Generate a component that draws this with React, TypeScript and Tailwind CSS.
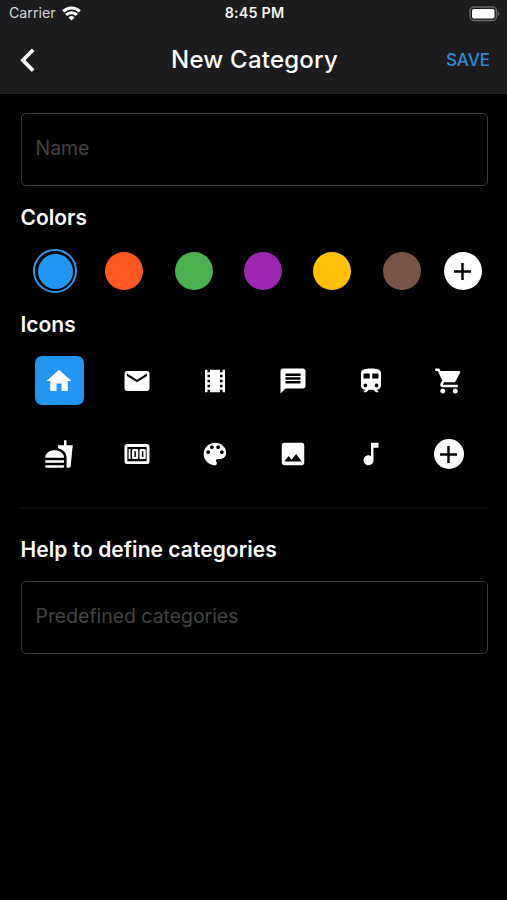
import { useState } from "react";
import { IconType } from "react-icons";
import {
  MdAdd,
  MdEmail,
  MdFastfood,
  MdHome,
  MdImage,
  MdMessage,
  MdMusicNote,
  MdShoppingCart,
  MdTheaters,
  MdTrain,
} from "react-icons/md";
import clsx from "clsx";

const MoneyIcon: IconType = ({ size }) => (
  <svg width={size} height={size} viewBox="0 0 24 24" fill="currentColor">
    <path
      fillRule="evenodd"
      d="M4 4h16a2 2 0 0 1 2 2v12a2 2 0 0 1-2 2H4a2 2 0 0 1-2-2V6c0-1.100.9-2 2-2zm.3 2.300v11.400h15.400V6.300z"
    />
    <path
      fillRule="evenodd"
      d="M5.300 8h1.500v8H5.300zM9 8h3a1 1 0 0 1 1 1v6a1 1 0 0 1-1 1H9a1 1 0 0 1-1-1V9a1 1 0 0 1 1-1zm.900 1.700v4.600h1.200V9.700zM15 8h3a1 1 0 0 1 1 1v6a1 1 0 0 1-1 1h-3a1 1 0 0 1-1-1V9a1 1 0 0 1 1-1zm.900 1.700v4.600h1.200V9.700z"
    />
  </svg>
);

const PaletteIcon: IconType = ({ size }) => (
  <svg width={size} height={size} viewBox="0 0 24 24" fill="currentColor">
    <path d="M12 3c-4.97 0-9 4.03-9 9s4.03 9 9 9c.83 0 1.5-.67 1.5-1.5 0-.39-.15-.74-.39-1.01-.23-.26-.38-.61-.38-.99 0-.83.67-1.5 1.500-1.500H16c2.760 0 5-2.240 5-5 0-4.420-4.030-8-9-8zm-5.500 9c-.83 0-1.500-.67-1.500-1.500S5.670 9 6.500 9 8 9.670 8 10.500 7.330 12 6.500 12zm3-4C8.670 8 8 7.330 8 6.500S8.670 5 9.500 5s1.500.67 1.500 1.500S10.330 8 9.500 8zm5 0c-.83 0-1.500-.67-1.500-1.500S13.670 5 14.500 5s1.500.67 1.500 1.500S15.330 8 14.500 8zm3 4c-.83 0-1.500-.67-1.500-1.500S16.670 9 17.500 9s1.500.67 1.500 1.500-.67 1.500-1.500 1.500z" />
  </svg>
);

const COLORS = [
  { name: "blue", fill: "bg-[#2196f3]", ring: "border-[#2f97e8]" },
  { name: "orange", fill: "bg-[#ff5722]", ring: "border-[#ff5722]" },
  { name: "green", fill: "bg-[#4caf50]", ring: "border-[#4caf50]" },
  { name: "purple", fill: "bg-[#9c27b0]", ring: "border-[#9c27b0]" },
  { name: "amber", fill: "bg-[#ffc107]", ring: "border-[#ffc107]" },
  { name: "brown", fill: "bg-[#795548]", ring: "border-[#795548]" },
];

const ICONS: { name: string; Icon: IconType }[] = [
  { name: "home", Icon: MdHome },
  { name: "mail", Icon: MdEmail },
  { name: "movies", Icon: MdTheaters },
  { name: "message", Icon: MdMessage },
  { name: "train", Icon: MdTrain },
  { name: "shopping", Icon: MdShoppingCart },
  { name: "food", Icon: MdFastfood },
  { name: "money", Icon: MoneyIcon },
  { name: "palette", Icon: PaletteIcon },
  { name: "image", Icon: MdImage },
  { name: "music", Icon: MdMusicNote },
];

const StatusBar = () => (
  <div className="grid h-[27px] grid-cols-3 items-center pl-[9px] pr-[7px] leading-none">
    <div className="flex items-center gap-[6px] text-[#d6d6d8]">
      <span className="text-[14.2px]">Carrier</span>
      <svg width="19" height="15" viewBox="0 0 19 15" fill="none" stroke="#fff" strokeWidth="3">
        <path d="M1.200 5.400a11.800 11.800 0 0 1 16.600 0" />
        <path d="M4.100 8.900a7.600 7.600 0 0 1 10.800 0" />
        <path d="M9.500 14.400 6.500 11.400a4.300 4.300 0 0 1 6 0z" fill="#fff" stroke="none" />
      </svg>
    </div>
    <div className="text-center text-[14.3px] font-semibold tracking-[0.2px] text-[#f2f2f3]">8:45 PM</div>
    <svg className="justify-self-end" width="31" height="16" viewBox="0 0 31 16">
      <rect x="1" y="1" width="26.5" height="13.5" rx="4" fill="none" stroke="#68686a" strokeWidth="1.4" />
      <rect x="3" y="3" width="22.5" height="9.5" rx="2" fill="#fff" />
      <path d="M28.8 5.5c2 .6 2 4 0 4.6z" fill="#68686a" />
    </svg>
  </div>
);

const App = () => {
  const [color, setColor] = useState("blue");
  const [icon, setIcon] = useState("home");

  return (
    <div className="min-h-[900px] w-full bg-black font-['Inter',sans-serif] text-white">
      <header className="h-[94px] border-b border-[#222224] bg-[#1c1c1e]">
        <StatusBar />
        <div className="grid h-[66px] grid-cols-[1fr_auto_1fr] items-center pl-[19px] pr-[17px]">
          <button type="button" aria-label="Back">
            <svg width="16" height="25" viewBox="0 0 16 25" fill="none" stroke="#fff" strokeWidth="3.7">
              <path d="M14.200 1.800 3.900 12.200l10.300 10.400" />
            </svg>
          </button>
          <h1 className="text-[24px] font-medium leading-none tracking-[0.22px]">New Category</h1>
          <button type="button" className="justify-self-end text-[17px] font-medium leading-none text-[#2a8bdb]">
            SAVE
          </button>
        </div>
      </header>

      <main className="pl-[20.5px] pr-[19.5px] pt-[19px]">
        <input
          placeholder="Name"
          className="block h-[73px] w-full rounded-[5px] border-[1.5px] border-[#3a3a3a] bg-transparent px-[14px] pb-[3px] text-[19.5px] tracking-[-0.05px] outline-none placeholder:text-[#444444]"
        />

        <h2 className="mt-[19px] text-[21px] font-semibold leading-[26px]">Colors</h2>
        <div className="mt-[17px] flex h-[46px] items-center">
          {COLORS.map(({ name, fill, ring }) => (
            <button
              key={name}
              type="button"
              aria-label={name}
              onClick={() => setColor(name)}
              className="flex w-[69.3px] justify-center"
            >
              {color === name ? (
                <span className={clsx("flex size-11 items-center justify-center rounded-full border-2", ring)}>
                  <span className={clsx("size-[35px] rounded-full", fill)} />
                </span>
              ) : (
                <span className={clsx("size-[38px] rounded-full", fill)} />
              )}
            </button>
          ))}
          <button
            type="button"
            aria-label="Add color"
            className="ml-[7.5px] flex size-[38px] items-center justify-center rounded-full bg-white text-black"
          >
            <MdAdd size={29} />
          </button>
        </div>

        <h2 className="mt-[18px] text-[21px] font-semibold leading-[26px]">Icons</h2>
        <div className="mt-[18px] grid grid-cols-6 justify-items-center gap-y-[24.5px]">
          {ICONS.map(({ name, Icon }) => (
            <button
              key={name}
              type="button"
              aria-label={name}
              onClick={() => setIcon(name)}
              className={clsx(
                "flex size-[49px] items-center justify-center rounded-[7px]",
                icon === name && "bg-[#2196f3]",
              )}
            >
              <Icon size={30} />
            </button>
          ))}
          <button type="button" aria-label="Add icon" className="flex size-[49px] items-center justify-center">
            <span className="flex size-[30px] items-center justify-center rounded-full bg-white text-black">
              <MdAdd size={29} />
            </span>
          </button>
        </div>

        <hr className="mt-[28.5px] border-t-2 border-[#0c0c0c]" />

        <h2 className="mt-[28px] text-[21px] font-semibold leading-[26px] tracking-[0.05px]">
          Help to define categories
        </h2>
        <input
          placeholder="Predefined categories"
          className="mt-[18px] block h-[73px] w-full rounded-[5px] border-[1.5px] border-[#3a3a3a] bg-transparent px-[14px] pb-[3px] text-[19.5px] tracking-[-0.05px] outline-none placeholder:text-[#444444]"
        />
      </main>
    </div>
  );
};

export default App;
